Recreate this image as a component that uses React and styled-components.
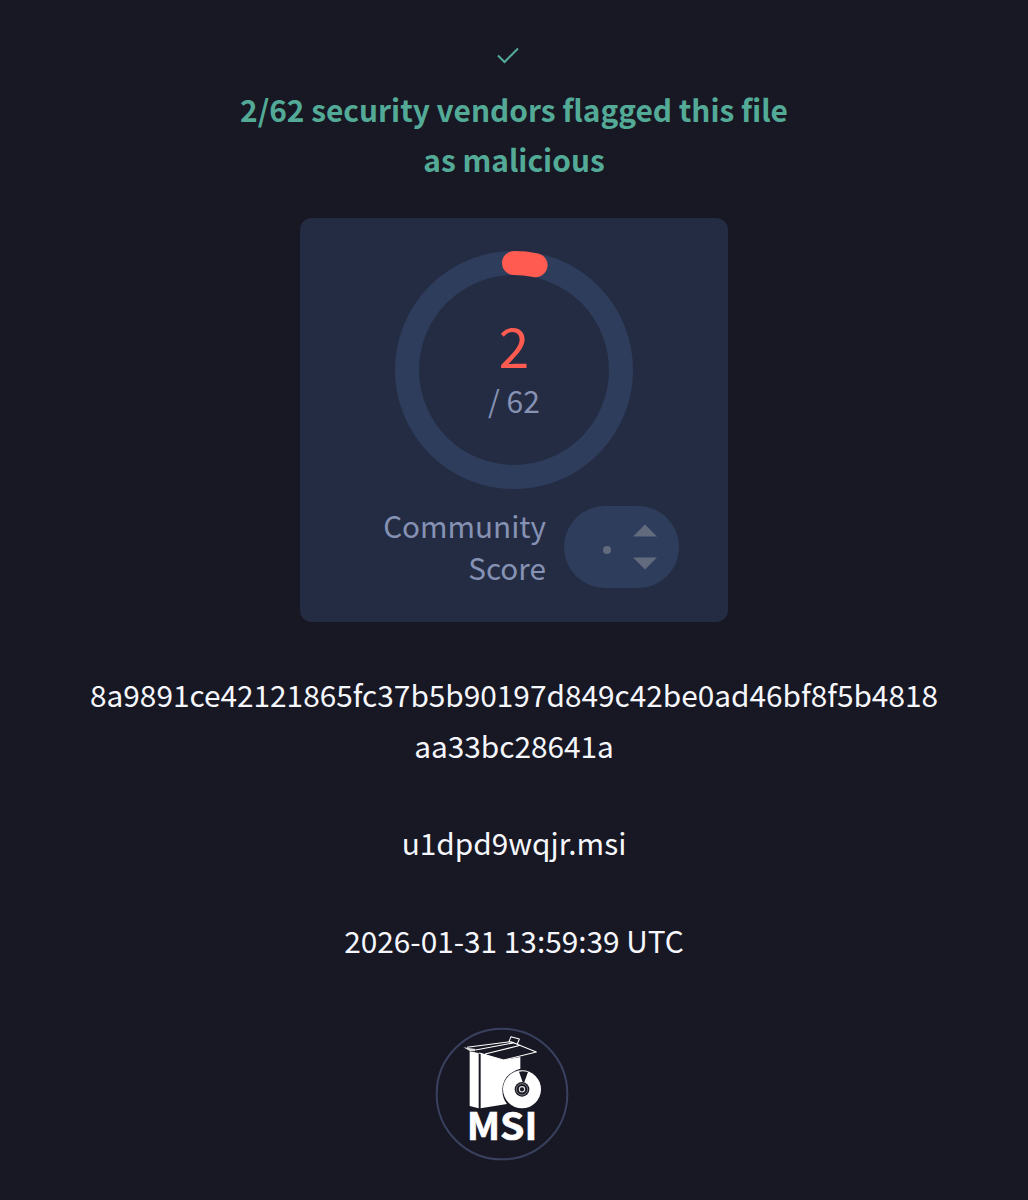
import React from "react";
import styled, { createGlobalStyle } from "styled-components";

const GlobalStyle = createGlobalStyle`
  html, body { margin: 0; background: #181824; }
  * { box-sizing: border-box; }
`;

const Page = styled.main`
  min-height: 1200px;
  padding-top: 43px;
  display: flex;
  flex-direction: column;
  align-items: center;
  background: #181824;
  color: #f6f7fc;
  font-family: "Noto Sans CJK SC", "Noto Sans", sans-serif;
  font-size: 29.8px;
  line-height: 51px;
  text-align: center;
`;

const CheckIcon = styled.svg`
  width: 24px;
  height: 24px;
  margin-right: 12px;
`;

const Verdict = styled.h1`
  margin: 17px 0 0;
  width: 600px;
  color: #53ab97;
  font-size: 29.85px;
  font-weight: 700;
  line-height: 50px;
`;

const Card = styled.section`
  margin-top: 34px;
  width: 428px;
  height: 404px;
  padding-top: 33px;
  display: flex;
  flex-direction: column;
  align-items: center;
  border-radius: 12px;
  background: #242c43;
`;

const Gauge = styled.div`
  width: 238px;
  height: 238px;
  display: grid;
  place-items: center;
  > * { grid-area: 1 / 1; }
`;

const Ring = styled.svg`
  width: 238px;
  height: 238px;
`;

const Score = styled.div`
  display: flex;
  flex-direction: column;
  align-items: center;
`;

const Detections = styled.span`
  font-size: 55px;
  font-weight: 400;
  line-height: 58px;
  color: #ff5b50;
`;

const Total = styled.span`
  margin-bottom: -2px;
  font-size: 30px;
  font-weight: 400;
  line-height: 55px;
  color: #8692b4;
`;

const Community = styled.div`
  align-self: stretch;
  margin-top: 17px;
  padding-right: 49px;
  display: flex;
  justify-content: flex-end;
  gap: 18px;
`;

const CommunityLabel = styled.div`
  width: 190px;
  margin-top: -1px;
  font-size: 29.7px;
  font-weight: 400;
  line-height: 42px;
  color: #8692b4;
  text-align: right;
`;

const Votes = styled.div`
  width: 115px;
  height: 82px;
  padding: 0 22px 0 39px;
  display: flex;
  align-items: center;
  justify-content: space-between;
  border-radius: 41px;
  background: #2f3d5c;
`;

const Dot = styled.span`
  width: 8px;
  height: 8px;
  margin-top: 6px;
  border-radius: 50%;
  background: #626a7e;
`;

const Arrows = styled.svg`
  width: 24px;
  height: 46px;
`;

const Detail = styled.p`
  margin: ${(p) => p.$gap}px 0 0;
  width: 900px;
`;

const FileLogo = styled.svg`
  margin-top: 61px;
  margin-right: 24px;
  width: 134px;
  height: 134px;
`;

const RADIUS = 107;
const LENGTH = 2 * Math.PI * RADIUS;

export default function App() {
  const flagged = 2;
  const vendors = 62;
  return (
    <>
      <GlobalStyle />
      <Page>
        <CheckIcon viewBox="0 0 24 24" fill="none" stroke="#53ab97" strokeWidth="2">
          <path d="M2 12.5 L8.5 19 L22 5.5" />
        </CheckIcon>
        <Verdict>
          2/62 security vendors flagged this file
          <br />
          as malicious
        </Verdict>
        <Card>
          <Gauge>
            <Ring viewBox="0 0 238 238" fill="none" strokeWidth="24">
              <circle cx="119" cy="119" r={RADIUS} stroke="#2f3d5c" />
              <circle
                cx="119"
                cy="119"
                r={RADIUS}
                stroke="#ff5b50"
                strokeLinecap="round"
                strokeDasharray={`${(LENGTH * flagged) / vendors} ${LENGTH}`}
                transform="rotate(-90 119 119)"
              />
            </Ring>
            <Score>
              <Detections>{flagged}</Detections>
              <Total>/ {vendors}</Total>
            </Score>
          </Gauge>
          <Community>
            <CommunityLabel>
              Community
              <br />
              Score
            </CommunityLabel>
            <Votes>
              <Dot />
              <Arrows viewBox="0 0 24 46" fill="#626a7e">
                <path d="M0 12.5 L12 0.5 L24 12.5Z" />
                <path d="M0 33.5 H24 L12 45.5Z" />
              </Arrows>
            </Votes>
          </Community>
        </Card>
        <Detail $gap={47}>
          8a9891ce42121865fc37b5b90197d849c42be0ad46bf8f5b4818
          <br />
          aa33bc28641a
        </Detail>
        <Detail $gap={46}>u1dpd9wqjr.msi</Detail>
        <Detail $gap={47}>2026-01-31 13:59:39 UTC</Detail>
        <FileLogo viewBox="34 25 402 402">
          <circle cx="235" cy="226" r="196" fill="none" stroke="#39415f" strokeWidth="6" />
          <path d="M138 98 L165 103 L165 269 L138 262Z" fill="#fff" />
          <path d="M171 103 L238 124 L290 115 V150 Q238 166 236 212 Q236 240 250 256 L171 269Z" fill="#fff" />
          <path d="M119 86 L156 91 L154 98 L138 97Z" fill="#ddd" />
          <path
            d="M130 86 L262 69 L338 100 L240 124 L166 103 M156 94 L272 72 M184 106 L290 80 M256 69 L262 54 L287 61 L281 76Z"
            fill="none"
            stroke="#fff"
            strokeWidth="3.2"
            strokeLinejoin="round"
          />
          <circle cx="295" cy="212" r="57" fill="#fff" />
          <path d="M286 159 Q299 156 313 160 L302 190 H297Z" fill="#181824" />
          <circle cx="295" cy="212" r="22" fill="#181824" />
          <circle cx="295" cy="212" r="17" fill="none" stroke="#aaa" strokeWidth="2" />
          <circle cx="295" cy="212" r="8" fill="none" stroke="#ddd" strokeWidth="3.5" />
          <text
            x="129"
            y="363"
            fill="#fff"
            stroke="#fff"
            strokeWidth="2"
            fontFamily="'Noto Sans CJK SC', sans-serif"
            fontWeight="700"
            fontSize="114"
            textLength="212"
            lengthAdjust="spacingAndGlyphs"
          >
            MSI
          </text>
        </FileLogo>
      </Page>
    </>
  );
}
